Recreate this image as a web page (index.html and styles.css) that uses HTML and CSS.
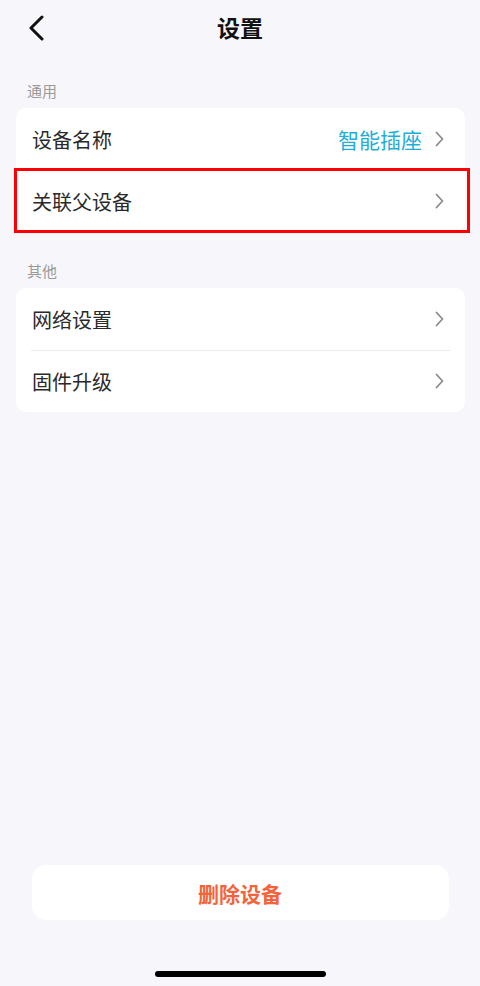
FILE: index.html
```html
<!DOCTYPE html>
<html lang="zh-CN">
<head>
    <meta charset="UTF-8">
    <meta name="viewport" content="width=device-width, initial-scale=1.0">
    <title>设置</title>
    <link rel="stylesheet" href="styles.css">
</head>
<body>
    <div class="app">
        <div class="header">
            <button class="back" aria-label="返回">
                <svg width="16" height="26" viewBox="0 0 16 26">
                    <path d="M14 2 L3 13 L14 24" fill="none" stroke="#111" stroke-width="3" stroke-linecap="round" stroke-linejoin="round"/>
                </svg>
            </button>
            <h1 class="title">设置</h1>
            <span></span>
        </div>

        <div class="section-title">通用</div>
        <div class="card">
            <div class="row">
                <span class="row-label">设备名称</span>
                <span class="row-value">智能插座</span>
                <svg class="arrow" width="9" height="16" viewBox="0 0 9 16">
                    <path d="M1.5 1.5 L7.5 8 L1.5 14.5" fill="none" stroke="#8c8c8c" stroke-width="1.8" stroke-linecap="round" stroke-linejoin="round"/>
                </svg>
            </div>
            <div class="row marked">
                <span class="row-label">关联父设备</span>
                <svg class="arrow" width="9" height="16" viewBox="0 0 9 16">
                    <path d="M1.5 1.5 L7.5 8 L1.5 14.5" fill="none" stroke="#8c8c8c" stroke-width="1.8" stroke-linecap="round" stroke-linejoin="round"/>
                </svg>
            </div>
        </div>

        <div class="section-title">其他</div>
        <div class="card">
            <div class="row">
                <span class="row-label">网络设置</span>
                <svg class="arrow" width="9" height="16" viewBox="0 0 9 16">
                    <path d="M1.5 1.5 L7.5 8 L1.5 14.5" fill="none" stroke="#8c8c8c" stroke-width="1.8" stroke-linecap="round" stroke-linejoin="round"/>
                </svg>
            </div>
            <div class="row">
                <span class="row-label">固件升级</span>
                <svg class="arrow" width="9" height="16" viewBox="0 0 9 16">
                    <path d="M1.5 1.5 L7.5 8 L1.5 14.5" fill="none" stroke="#8c8c8c" stroke-width="1.8" stroke-linecap="round" stroke-linejoin="round"/>
                </svg>
            </div>
        </div>

        <div class="footer">
            <button class="delete">删除设备</button>
            <div class="home-bar"></div>
        </div>
    </div>
</body>
</html>
```

FILE: styles.css
```css
body {
    margin: 0;
    background: #f7f7fb;
    font-family: "Noto Sans CJK SC", "Noto Sans", sans-serif;
    color: #2a2a2a;
}
.app {
    min-height: 100vh;
    display: flex;
    flex-direction: column;
}
.header {
    height: 56px;
    display: grid;
    grid-template-columns: 64px 1fr 64px;
    align-items: center;
}
.back {
    border: none;
    background: none;
    padding: 0 0 0 28px;
    height: 56px;
    display: flex;
    align-items: center;
    cursor: pointer;
}
.title {
    margin: 0 0 3px;
    text-align: center;
    font-size: 23px;
    font-weight: 600;
    color: #111;
}
.section-title {
    padding: 24px 27px 0;
    height: 22px;
    line-height: 22px;
    font-size: 15px;
    color: #9a9a9a;
    margin-bottom: 6px;
}
.card {
    margin: 0 15px 4px 16px;
    background: #fff;
    border-radius: 10px;
}
.row {
    height: 62px;
    display: flex;
    align-items: center;
    padding: 0 21px 0 16px;
    position: relative;
}
.row + .row::before {
    content: "";
    position: absolute;
    top: 0;
    left: 15px;
    right: 15px;
    border-top: 1px solid #ececec;
}
.row-label {
    flex: 1;
    font-size: 20px;
}
.row-value {
    font-size: 21px;
    color: #1eaed8;
    margin-right: 13px;
}
.arrow {
    display: block;
}
.marked::after {
    content: "";
    position: absolute;
    top: -2px;
    left: -2px;
    right: -5px;
    bottom: -1px;
    border: 3px solid #f00;
}
.footer {
    margin-top: auto;
    display: flex;
    flex-direction: column;
    align-items: center;
}
.delete {
    width: 417px;
    height: 55px;
    border: none;
    border-radius: 14px;
    background: #fff;
    color: #f4643a;
    font-family: inherit;
    font-size: 21px;
    font-weight: 600;
    margin-bottom: 51px;
    cursor: pointer;
}
.home-bar {
    width: 171px;
    height: 6px;
    border-radius: 3px;
    background: #000;
    margin-bottom: 9px;
}
```
